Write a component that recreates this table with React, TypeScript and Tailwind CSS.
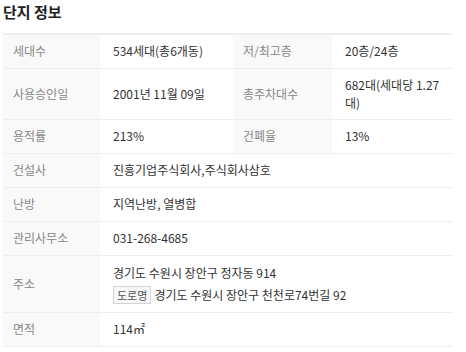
import React from 'react';

interface Row {
  cells: { label: string; value: React.ReactNode; span?: boolean }[];
  tall?: boolean;
}

const labelCls = 'bg-[#f9f9f9] text-[#888888] pl-[10px] align-middle';
const valueCls = 'text-[#333333] pl-[13px] pr-[8px] align-middle';

export default function App() {
  const rows: Row[] = [
    {
      cells: [
        { label: '세대수', value: '534세대(총6개동)' },
        { label: '저/최고층', value: '20층/24층' },
      ],
    },
    {
      cells: [
        { label: '사용승인일', value: '2001년 11월 09일' },
        { label: '총주차대수', value: '682대(세대당 1.27대)' },
      ],
    },
    {
      cells: [
        { label: '용적률', value: '213%' },
        { label: '건폐율', value: '13%' },
      ],
    },
    { cells: [{ label: '건설사', value: '진흥기업주식회사,주식회사삼호', span: true }] },
    { cells: [{ label: '난방', value: '지역난방, 열병합', span: true }] },
    { cells: [{ label: '관리사무소', value: '031-268-4685', span: true }] },
    {
      tall: true,
      cells: [
        {
          label: '주소',
          span: true,
          value: (
            <div className="flex flex-col gap-[4px]">
              <div>경기도 수원시 장안구 정자동 914</div>
              <div className="flex items-center gap-[3px]">
                <span className="border border-[#d5d5d5] bg-[#f7f7f7] text-[#555555] text-[11px] leading-[16px] px-[3px]">
                  도로명
                </span>
                <span>경기도 수원시 장안구 천천로74번길 92</span>
              </div>
            </div>
          ),
        },
      ],
    },
    { cells: [{ label: '면적', value: <span>114㎡</span>, span: true }] },
  ];

  return (
    <div
      className="w-[466px] h-[352px] bg-white overflow-hidden pl-[3px] pr-[14px]"
      style={{ fontFamily: '"Noto Sans CJK KR", "Noto Sans", sans-serif' }}
    >
      <h2 className="text-[15px] font-bold text-[#222222] leading-[22px] pt-[1px] pb-[10px]">단지 정보</h2>
      <table className="w-[449px] table-fixed border-collapse border-t-2 border-[#eeeeee] text-[12px]">
        <colgroup>
          <col className="w-[97px]" />
          <col className="w-[133px]" />
          <col className="w-[99px]" />
          <col className="w-[120px]" />
        </colgroup>
        <tbody>
          {rows.map((row, i) => (
            <tr key={i} className={`border-b border-[#eeeeee] ${row.tall ? 'h-[57px]' : i === 1 ? 'h-[51px]' : 'h-[34px]'}`}>
              {row.cells.map((c, j) => (
                <React.Fragment key={j}>
                  <td className={labelCls}>{c.label}</td>
                  <td className={valueCls} colSpan={c.span ? 3 : 1}>
                    {c.value}
                  </td>
                </React.Fragment>
              ))}
            </tr>
          ))}
        </tbody>
      </table>
    </div>
  );
}
